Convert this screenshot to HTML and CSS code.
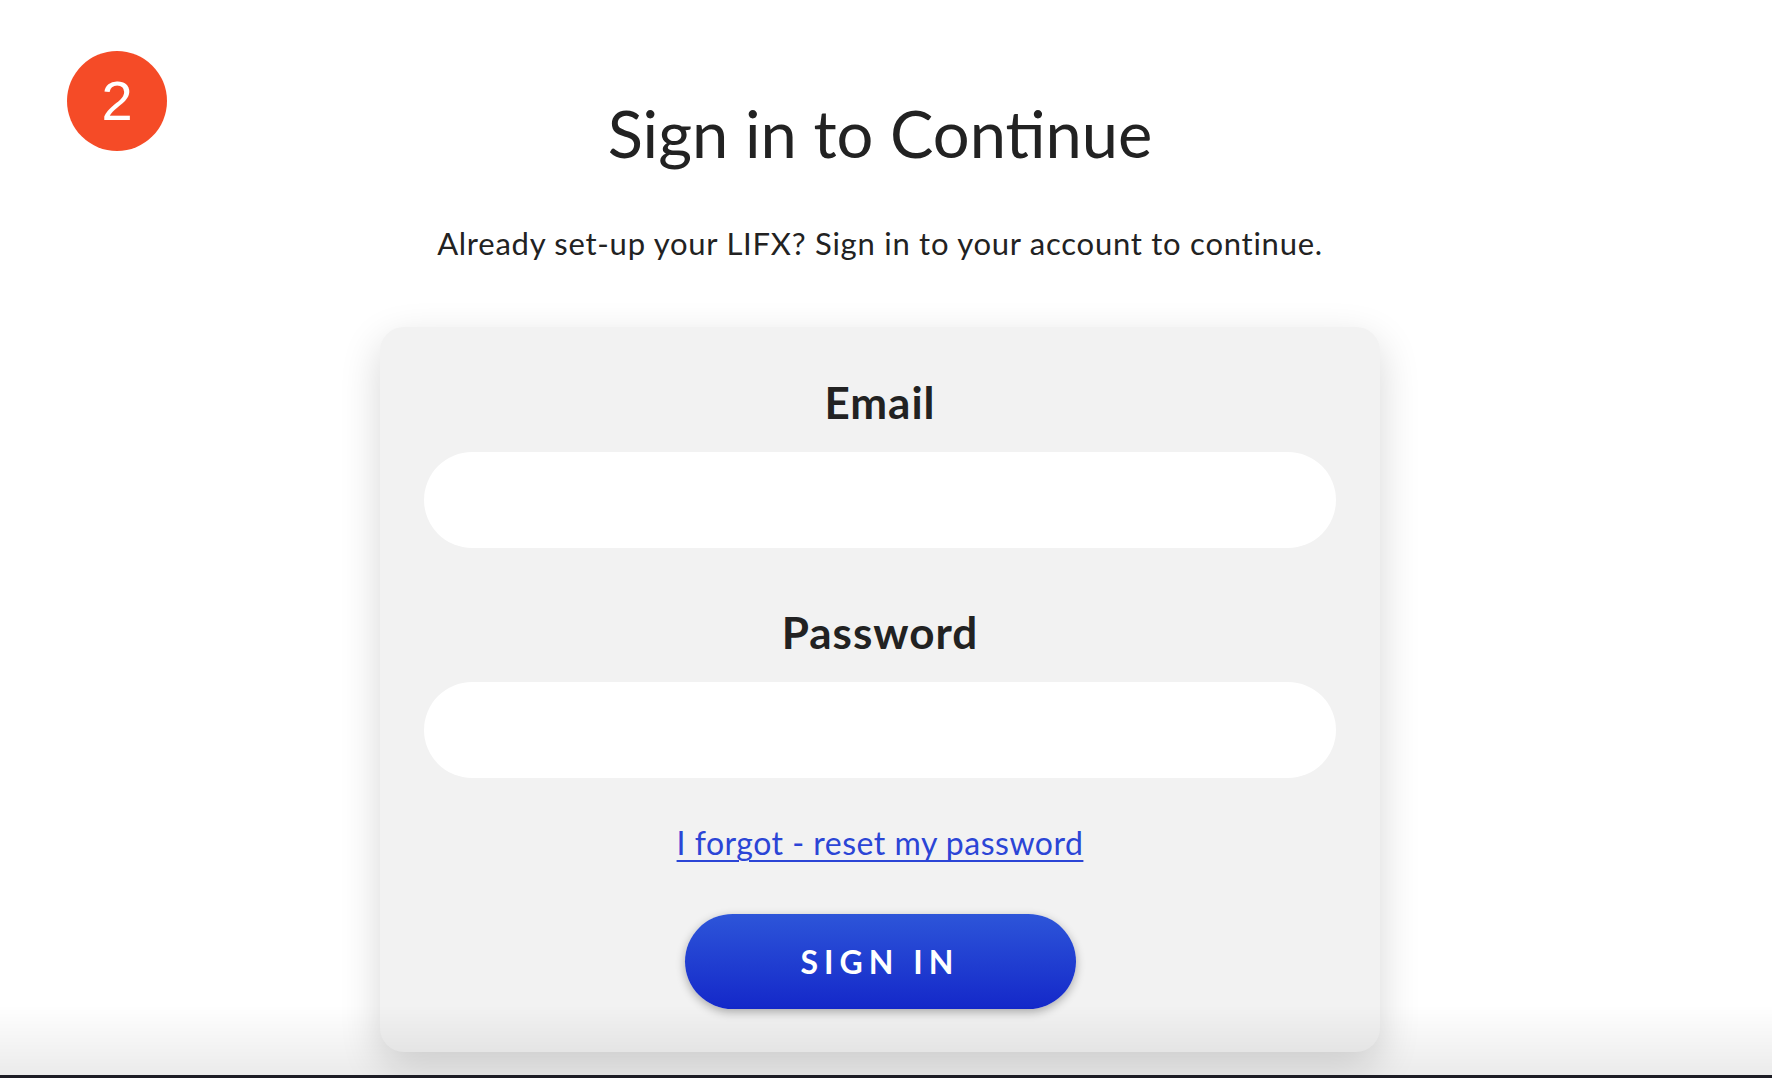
FILE: index.html
```html
<!DOCTYPE html>
<html lang="en">
<head>
<meta charset="utf-8">
<title>Sign in to Continue</title>
<link rel="stylesheet" href="styles.css">
</head>
<body>
<div class="step-badge">2</div>
<main class="page">
  <h1 class="title">Sign in to Continue</h1>
  <p class="subtitle">Already set-up your LIFX? Sign in to your account to continue.</p>
  <form class="card">
    <label class="field-label" for="email">Email</label>
    <input class="field-input" id="email" type="email">
    <label class="field-label field-label--second" for="password">Password</label>
    <input class="field-input" id="password" type="password">
    <a class="forgot" href="#">I forgot - reset my password</a>
    <button class="signin" type="button">SIGN IN</button>
  </form>
</main>
<div class="bottom-fade"></div>
</body>
</html>
```

FILE: styles.css
```css
html, body {
  margin: 0;
  padding: 0;
  background: #ffffff;
  height: 100%;
  overflow: hidden;
}

body {
  font-family: "Lato", "Noto Sans", sans-serif;
  color: #222222;
}

.step-badge {
  position: absolute;
  left: 67px;
  top: 51px;
  width: 100px;
  height: 100px;
  border-radius: 50%;
  background: #f54b27;
  color: #ffffff;
  font-family: "Liberation Sans", Arial, sans-serif;
  font-size: 56px;
  line-height: 100px;
  text-align: center;
}

.page {
  display: flex;
  flex-direction: column;
  align-items: center;
  padding-top: 96px;
  padding-right: 12px;
}

.title {
  margin: 0;
  font-size: 65px;
  line-height: 74px;
  font-weight: 400;
  color: #222222;
}

.subtitle {
  margin: 55px 0 0;
  font-size: 31px;
  line-height: 36px;
  letter-spacing: 0.75px;
  color: #222222;
}

.card {
  margin-top: 66px;
  width: 1000px;
  box-sizing: border-box;
  padding: 51px 44px 43px;
  background: #f2f2f2;
  border-radius: 24px;
  box-shadow: 0 14px 40px rgba(0, 0, 0, 0.16);
  display: flex;
  flex-direction: column;
  align-items: center;
}

.field-label {
  font-size: 44px;
  line-height: 48px;
  font-weight: 700;
  letter-spacing: 1px;
  color: #222222;
}

.field-label--second {
  margin-top: 60px;
}

.field-input {
  margin-top: 26px;
  width: 100%;
  height: 96px;
  box-sizing: border-box;
  border: none;
  border-radius: 48px;
  background: #ffffff;
  outline: none;
  padding: 0 40px;
  font-size: 28px;
}

.forgot {
  margin-top: 47px;
  font-size: 32px;
  line-height: 36px;
  letter-spacing: 0.5px;
  color: #2b45d6;
  text-decoration: underline;
  text-decoration-thickness: 2px;
  text-underline-offset: 5px;
}

.signin {
  margin-top: 53px;
  width: 391px;
  height: 95px;
  border: none;
  border-radius: 48px;
  background: linear-gradient(to bottom, #2d55d9, #1428c9);
  box-shadow: 0 3px 10px rgba(0, 0, 0, 0.3);
  color: #ffffff;
  font-family: "Lato", "Noto Sans", sans-serif;
  font-size: 32px;
  font-weight: 700;
  letter-spacing: 6px;
  padding-left: 6px;
}

.bottom-fade {
  position: fixed;
  left: 0;
  right: 0;
  bottom: 0;
  height: 70px;
  background: linear-gradient(to bottom, rgba(0, 0, 0, 0), rgba(0, 0, 0, 0.08));
  border-bottom: 3px solid #1c1c24;
  pointer-events: none;
}
```
